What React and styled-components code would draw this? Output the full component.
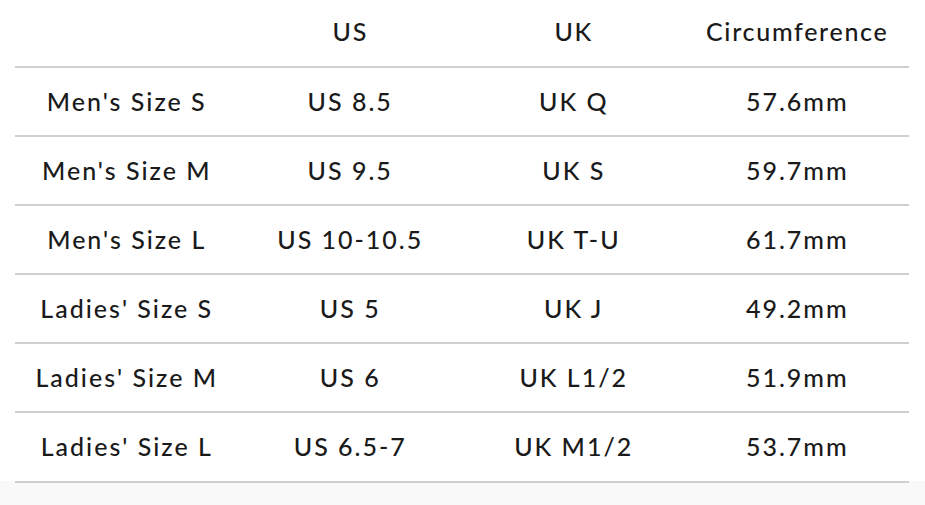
import React from 'react'
import styled, { createGlobalStyle } from 'styled-components'

const GlobalStyle = createGlobalStyle`
  html, body {
    margin: 0;
    padding: 0;
    background: #f9f9f9;
  }
`

const rows = [
  ["Men's Size S", 'US 8.5', 'UK Q', '57.6mm'],
  ["Men's Size M", 'US 9.5', 'UK S', '59.7mm'],
  ["Men's Size L", 'US 10-10.5', 'UK T-U', '61.7mm'],
  ["Ladies' Size S", 'US 5', 'UK J', '49.2mm'],
  ["Ladies' Size M", 'US 6', 'UK L1/2', '51.9mm'],
  ["Ladies' Size L", 'US 6.5-7', 'UK M1/2', '53.7mm'],
]

const App = () => {
  return (
    <>
      <GlobalStyle />
      <StyledSizeChart>
        <Table>
          <thead>
            <HeadRow>
              <HeadCell></HeadCell>
              <HeadCell>US</HeadCell>
              <HeadCell>UK</HeadCell>
              <HeadCell>Circumference</HeadCell>
            </HeadRow>
          </thead>
          <tbody>
            {rows.map((r) => (
              <Row key={r[0]}>
                {r.map((c, i) => (
                  <Cell key={i}>{c}</Cell>
                ))}
              </Row>
            ))}
          </tbody>
        </Table>
      </StyledSizeChart>
    </>
  )
}

const StyledSizeChart = styled.section`
  background: linear-gradient(#fff, #fff) top / 100% calc(100% - 2px) no-repeat;
  padding: 0 16px 0 15px;
  font-family: 'Lato', 'Noto Sans', sans-serif;
  color: #1a1a1a;
`

const Table = styled.table`
  width: 100%;
  border-collapse: collapse;
  table-layout: fixed;
`

const HeadRow = styled.tr`
  height: 67px;
  border-bottom: 2px solid #cfcfcf;
`

const HeadCell = styled.th`
  font-weight: 500;
  font-size: 25px;
  letter-spacing: 1.7px;
  text-align: center;
  vertical-align: middle;
  padding: 0 0 4px;
`

const Row = styled.tr`
  height: 69.1px;
  border-bottom: 2px solid #cfcfcf;
`

const Cell = styled.td`
  font-weight: 500;
  font-size: 25px;
  letter-spacing: 2px;
  text-align: center;
  vertical-align: middle;
  padding: 0 0 2px;
`

export default App
